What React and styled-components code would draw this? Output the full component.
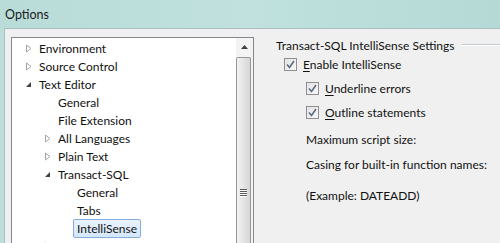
import styled, { createGlobalStyle } from "styled-components";

const Global = createGlobalStyle`
  html, body { margin: 0; padding: 0; }
  body {
    font-family: Lato, "Noto Sans", sans-serif;
    font-size: 12px;
    color: #111;
    overflow: hidden;
  }
`;

const tree = [
  { label: "Environment", level: 0, exp: "closed" },
  { label: "Source Control", level: 0, exp: "closed" },
  { label: "Text Editor", level: 0, exp: "open" },
  { label: "General", level: 1 },
  { label: "File Extension", level: 1 },
  { label: "All Languages", level: 1, exp: "closed" },
  { label: "Plain Text", level: 1, exp: "closed" },
  { label: "Transact-SQL", level: 1, exp: "open" },
  { label: "General", level: 2 },
  { label: "Tabs", level: 2 },
  { label: "IntelliSense", level: 2, selected: true },
  { label: "XML", level: 1, exp: "closed" },
];

const Expander = ({ kind }) => {
  if (kind === "closed")
    return (
      <svg width="9" height="9" viewBox="0 0 9 9">
        <path d="M2.5 1 L7 4.5 L2.5 8 Z" fill="#fff" stroke="#a6a6a6" />
      </svg>
    );
  if (kind === "open")
    return (
      <svg width="9" height="9" viewBox="0 0 9 9">
        <path d="M7 2 L7 7 L2 7 Z" fill="#404040" />
      </svg>
    );
  return null;
};

const Check = () => (
  <svg width="9" height="9" viewBox="0 0 9 9">
    <path d="M1 4.5 L3.5 7.5 L8 1" fill="none" stroke="#5b6b86" strokeWidth="1.6" />
  </svg>
);

const App = () => (
  <>
    <Global />
    <Window>
      <TitleBar>Options</TitleBar>
      <Body>
        <TreePanel>
          <TreeList>
            {tree.map((n, i) => (
              <Row key={i} $level={n.level}>
                <Toggle>
                  <Expander kind={n.exp} />
                </Toggle>
                <Label $selected={n.selected}>{n.label}</Label>
              </Row>
            ))}
          </TreeList>
          <ScrollBar>
            <ArrowBtn>
              <svg width="7" height="4" viewBox="0 0 7 4">
                <path d="M0 4 L3.5 0 L7 4 Z" fill="#404040" />
              </svg>
            </ArrowBtn>
            <Thumb>
              <Grip />
              <Grip />
              <Grip />
              <Grip />
            </Thumb>
          </ScrollBar>
        </TreePanel>
        <Settings>
          <GroupTitle>
            <span>Transact-SQL IntelliSense Settings</span>
            <Rule />
          </GroupTitle>
          <CheckRow $indent={0}>
            <Box>
              <Check />
            </Box>
            <span>
              <u>E</u>nable IntelliSense
            </span>
          </CheckRow>
          <CheckRow $indent={22}>
            <Box>
              <Check />
            </Box>
            <span>
              <u>U</u>nderline errors
            </span>
          </CheckRow>
          <CheckRow $indent={22}>
            <Box>
              <Check />
            </Box>
            <span>
              <u>O</u>utline statements
            </span>
          </CheckRow>
          <Field $gap={9}>Maximum script size:</Field>
          <Field $gap={12}>Casing for built-in function names:</Field>
          <Field $gap={18}>(Example: DATEADD)</Field>
        </Settings>
      </Body>
    </Window>
  </>
);

export default App;

const Window = styled.div`
  width: 500px;
  height: 243px;
  display: flex;
  flex-direction: column;
  overflow: hidden;
  background: #bcdedb;
`;

const TitleBar = styled.div`
  height: 28px;
  flex: none;
  display: flex;
  align-items: center;
  padding-left: 5px;
  font-size: 12.5px;
  color: #1b1b1b;
  background: linear-gradient(to right, #b9dcd8, #c0e1de 50%, #b5dad6);
`;

const Body = styled.div`
  flex: 1;
  display: flex;
  margin-left: 4px;
  padding: 8px 0 0 6px;
  background: #f0f0f0;
  border-top: 1px solid #a9bfc0;
  border-left: 1px solid #a9bfc0;
  min-height: 0;
`;

const TreePanel = styled.div`
  width: 241px;
  flex: none;
  display: flex;
  background: #fff;
  border: 1px solid #828790;
  border-bottom: none;
  overflow: hidden;
`;

const TreeList = styled.div`
  flex: 1;
  padding-top: 1px;
`;

const Row = styled.div`
  height: 18px;
  display: flex;
  align-items: center;
  padding-left: ${(p) => 12 + p.$level * 19}px;
`;

const Toggle = styled.span`
  width: 11px;
  flex: none;
  display: flex;
  align-items: center;
`;

const Label = styled.span`
  padding: 1px 3px;
  line-height: 15px;
  border: 1px solid ${(p) => (p.$selected ? "#84acdd" : "transparent")};
  border-radius: 2px;
  background: ${(p) =>
    p.$selected ? "linear-gradient(#eaf3fd, #d5e7fc)" : "transparent"};
`;

const ScrollBar = styled.div`
  width: 17px;
  flex: none;
  display: flex;
  flex-direction: column;
  background: #f3f3f3;
`;

const ArrowBtn = styled.div`
  height: 17px;
  display: flex;
  align-items: center;
  justify-content: center;
  margin-bottom: 2px;
`;

const Thumb = styled.div`
  flex: 1;
  margin: 0 2px 0 0;
  border: 1px solid #979797;
  border-bottom: none;
  border-radius: 2px 2px 0 0;
  background: linear-gradient(to right, #f2f2f2, #e4e4e4 50%, #d6d6d6);
  display: flex;
  flex-direction: column;
  align-items: center;
  justify-content: center;
  gap: 1px;
  padding-top: 84px;
`;

const Grip = styled.div`
  width: 7px;
  height: 1px;
  background: #5a5a5a;
  box-shadow: 0 1px 0 #fff;
`;

const Settings = styled.div`
  flex: 1;
  padding: 1px 0 0 22px;
  display: flex;
  flex-direction: column;
`;

const GroupTitle = styled.div`
  display: flex;
  align-items: center;
  gap: 8px;
  height: 14px;
`;

const Rule = styled.div`
  flex: 1;
  height: 1px;
  background: #c4cbd0;
  border-bottom: 1px solid #fff;
`;

const CheckRow = styled.label`
  display: flex;
  align-items: center;
  gap: 6px;
  height: 24px;
  padding-left: ${(p) => 8 + p.$indent}px;
  & u {
    text-decoration-thickness: 1px;
    text-underline-offset: 2px;
  }
`;

const Box = styled.span`
  width: 11px;
  height: 11px;
  border: 1px solid #8f8f8f;
  background: linear-gradient(135deg, #e4e4e4, #f8f8f8);
  display: flex;
  align-items: center;
  justify-content: center;
`;

const Field = styled.div`
  padding-left: 30px;
  margin-top: ${(p) => p.$gap}px;
  line-height: 13px;
`;
